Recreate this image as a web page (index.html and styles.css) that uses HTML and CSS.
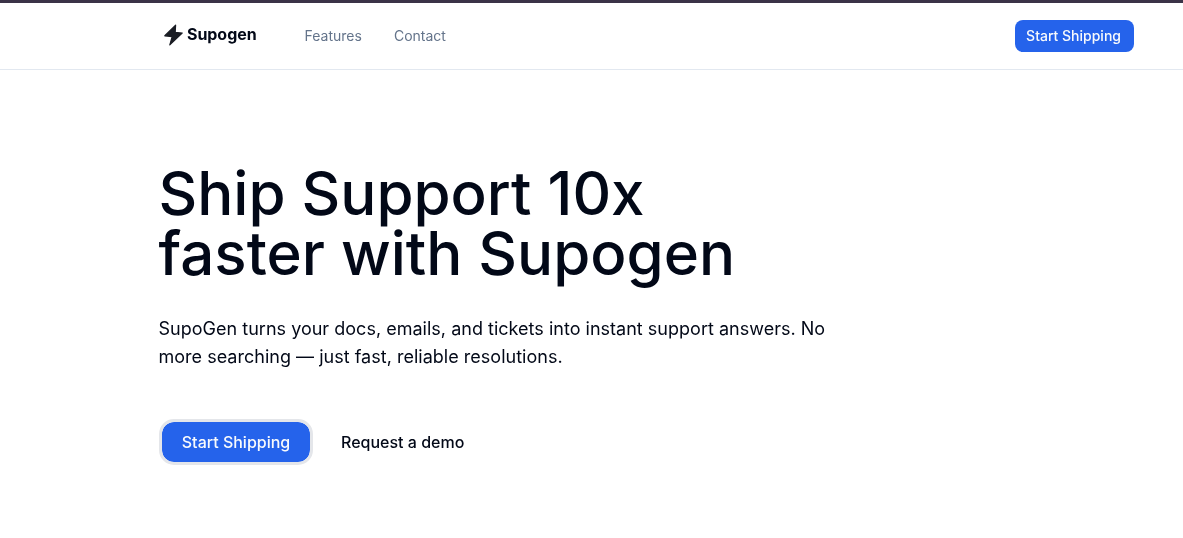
FILE: index.html
```html
<!DOCTYPE html>
<html lang="en">
<head>
    <meta charset="UTF-8">
    <meta name="viewport" content="width=device-width, initial-scale=1.0">
    <title>Supogen</title>
    <link rel="stylesheet" href="styles.css">
</head>
<body>
    <header class="site-header">
        <div class="nav-inner">
            <div class="nav-left">
                <a class="logo" href="#">
                    <svg class="logo-icon" viewBox="0 0 24 24" aria-hidden="true">
                        <path d="M14.6 2.2 3.8 12.8l7.4.8-2.4 8.2L21.2 10l-7-.6z"/>
                    </svg>
                    <span class="logo-text">Supogen</span>
                </a>
                <nav class="nav-links">
                    <a href="#">Features</a>
                    <a href="#">Contact</a>
                </nav>
            </div>
            <a class="btn-small" href="#">Start Shipping</a>
        </div>
    </header>

    <main class="hero">
        <h1>Ship Support 10x<br>faster with Supogen</h1>
        <p>SupoGen turns your docs, emails, and tickets into instant support answers. No more searching — just fast, reliable resolutions.</p>
        <div class="hero-actions">
            <a class="btn-large" href="#">Start Shipping</a>
            <a class="btn-link" href="#">Request a demo</a>
        </div>
    </main>
</body>
</html>
```

FILE: styles.css
```css
* {
    box-sizing: border-box;
}
body {
    font-family: 'Inter', sans-serif;
    background: #ffffff;
    color: #020817;
    margin: 0;
    min-height: 100vh;
    overflow: hidden;
}
a {
    text-decoration: none;
    color: inherit;
}
.site-header {
    border-top: 3px solid #3b3347;
    border-bottom: 1px solid #e2e8f0;
    height: 70px;
    will-change: opacity;
}
.nav-inner {
    height: 66px;
    padding: 0 49px 0 161px;
    display: flex;
    justify-content: space-between;
    align-items: center;
}
.nav-left {
    display: flex;
    align-items: center;
    gap: 48px;
    padding-bottom: 2px;
}
.logo {
    display: flex;
    align-items: center;
    gap: 2px;
    font-size: 16px;
    font-weight: 700;
    letter-spacing: -0.05px;
    color: #020817;
}
.logo-text {
    padding-bottom: 2px;
}
.logo-icon {
    width: 24px;
    height: 24px;
    fill: #1a1d24;
    stroke: #1a1d24;
    stroke-width: 1.2;
    stroke-linejoin: round;
}
.nav-links {
    display: flex;
    gap: 32px;
    font-size: 14px;
    color: #64748b;
}
.btn-small {
    background: #2563eb;
    color: #f8fafc;
    font-size: 14px;
    font-weight: 500;
    padding: 0 13px 0 11px;
    height: 32px;
    line-height: 31px;
    border-radius: 8px;
}
.hero {
    padding: 93px 0 0 158.5px;
    will-change: opacity;
}
h1 {
    margin: 0 0 32px;
    font-size: 60px;
    font-weight: 500;
    line-height: 60px;
}
.hero p {
    margin: 0 0 48px;
    width: 680px;
    font-size: 18px;
    line-height: 28px;
    letter-spacing: 0.015px;
}
.hero-actions {
    display: flex;
    align-items: center;
    gap: 28px;
}
.btn-large {
    margin-left: 0.5px;
    background: #2563eb;
    background-clip: padding-box;
    border: 3px solid #e4e6ea;
    color: #f8fafc;
    font-size: 16px;
    font-weight: 500;
    width: 154px;
    height: 46px;
    line-height: 40px;
    text-align: center;
    border-radius: 15px;
}
.btn-link {
    font-size: 16px;
    font-weight: 500;
    color: #020817;
}
```
